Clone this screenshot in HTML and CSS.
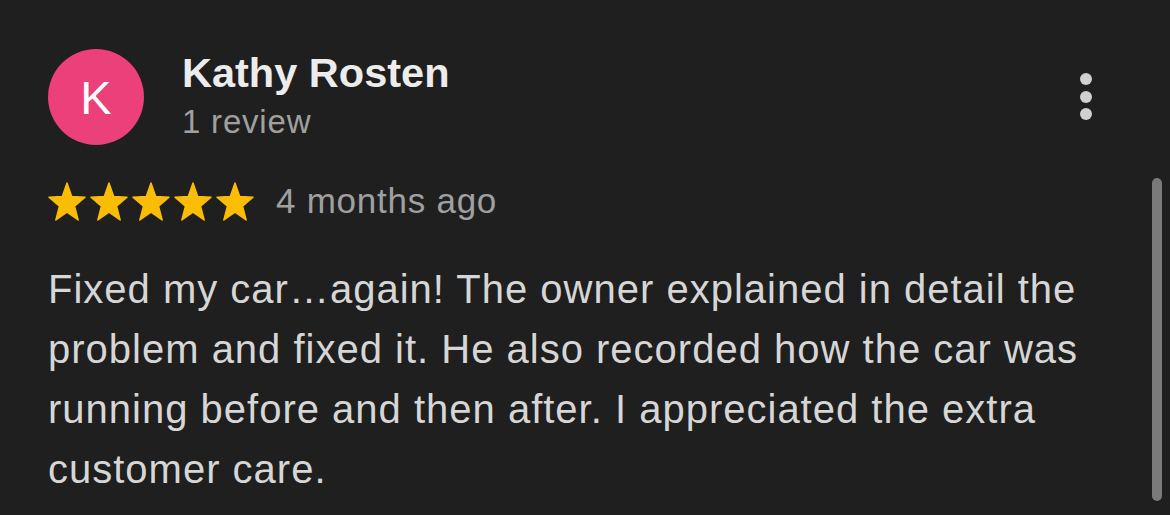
FILE: index.html
```html
<!DOCTYPE html>
<html lang="en">
<head>
    <meta charset="UTF-8">
    <meta name="viewport" content="width=device-width, initial-scale=1.0">
    <title>Review</title>
    <link rel="stylesheet" href="styles.css">
</head>
<body>

<div class="review">
    <!-- Reviewer header -->
    <div class="review-header">
        <div class="avatar">K</div>
        <div class="reviewer">
            <div class="reviewer-name">Kathy Rosten</div>
            <div class="reviewer-meta">1 review</div>
        </div>
        <div class="more-btn" aria-label="More options">
            <span class="dot"></span>
            <span class="dot"></span>
            <span class="dot"></span>
        </div>
    </div>

    <!-- Rating and date -->
    <div class="rating-row">
        <div class="stars">
            <svg class="star" viewBox="-1 -1 38 39"><polygon points="18,0 22.68,13.5 36,14.13 25.55,23.11 29.13,37 18,29.04 6.87,37 10.45,23.11 0,14.13 13.32,13.5"/></svg>
            <svg class="star" viewBox="-1 -1 38 39"><polygon points="18,0 22.68,13.5 36,14.13 25.55,23.11 29.13,37 18,29.04 6.87,37 10.45,23.11 0,14.13 13.32,13.5"/></svg>
            <svg class="star" viewBox="-1 -1 38 39"><polygon points="18,0 22.68,13.5 36,14.13 25.55,23.11 29.13,37 18,29.04 6.87,37 10.45,23.11 0,14.13 13.32,13.5"/></svg>
            <svg class="star" viewBox="-1 -1 38 39"><polygon points="18,0 22.68,13.5 36,14.13 25.55,23.11 29.13,37 18,29.04 6.87,37 10.45,23.11 0,14.13 13.32,13.5"/></svg>
            <svg class="star" viewBox="-1 -1 38 39"><polygon points="18,0 22.68,13.5 36,14.13 25.55,23.11 29.13,37 18,29.04 6.87,37 10.45,23.11 0,14.13 13.32,13.5"/></svg>
        </div>
        <span class="review-date">4 months ago</span>
    </div>

    <!-- Review text -->
    <p class="review-text">Fixed my car…again! The owner explained in detail the problem and fixed it. He also recorded how the car was running before and then after. I appreciated the extra customer care.</p>
</div>

<div class="scrollbar"></div>

</body>
</html>
```

FILE: styles.css
```css
/* Colors */
:root {
    --background: #1f1f1f;
    --avatar-pink: #ec407a;
    --star-yellow: #fbbc04;
    --text-strong: #ececec;
    --text-body: #d6d6d6;
    --text-muted: #a0a0a0;
    --icon-gray: #d0d0d0;
    --scroll-gray: #7a7a7a;
}

body {
    margin: 0;
    background-color: var(--background);
    font-family: "Liberation Sans", Arial, sans-serif;
    height: 515px;
    overflow: hidden;
}

.review {
    padding: 49px 70px 0 48px;
}

/* Header */
.review-header {
    display: flex;
    align-items: flex-start;
}

.avatar {
    width: 96px;
    height: 96px;
    border-radius: 50%;
    background-color: var(--avatar-pink);
    color: #ffffff;
    font-size: 47px;
    line-height: 1;
    display: flex;
    align-items: center;
    justify-content: center;
    flex-shrink: 0;
}

.reviewer {
    margin-left: 38px;
}

.reviewer-name {
    font-size: 41.5px;
    font-weight: bold;
    line-height: 48px;
    color: var(--text-strong);
}

.reviewer-meta {
    margin-top: 5px;
    font-size: 33px;
    line-height: 40px;
    letter-spacing: 0.8px;
    color: var(--text-muted);
}

.more-btn {
    margin-left: auto;
    margin-top: 24px;
    width: 28px;
    display: flex;
    flex-direction: column;
    align-items: center;
    gap: 5.6px;
}

.dot {
    width: 12px;
    height: 12px;
    border-radius: 50%;
    background-color: var(--icon-gray);
}

/* Rating */
.rating-row {
    display: flex;
    align-items: center;
    margin-top: 36px;
    height: 40px;
}

.stars {
    display: flex;
    gap: 4px;
}

.star {
    width: 38px;
    height: 39px;
    fill: var(--star-yellow);
    stroke: var(--star-yellow);
    stroke-width: 1.5;
    stroke-linejoin: round;
    display: block;
}

.review-date {
    margin-left: 22px;
    font-size: 35px;
    line-height: 40px;
    letter-spacing: 0.75px;
    color: var(--text-muted);
}

/* Body */
.review-text {
    margin: 38px 0 0;
    font-size: 40px;
    line-height: 60px;
    letter-spacing: 1px;
    color: var(--text-body);
}

/* Overlay scroll indicator */
.scrollbar {
    position: absolute;
    top: 178px;
    right: 8px;
    width: 10px;
    height: 323px;
    border-radius: 5px;
    background-color: var(--scroll-gray);
}
```
